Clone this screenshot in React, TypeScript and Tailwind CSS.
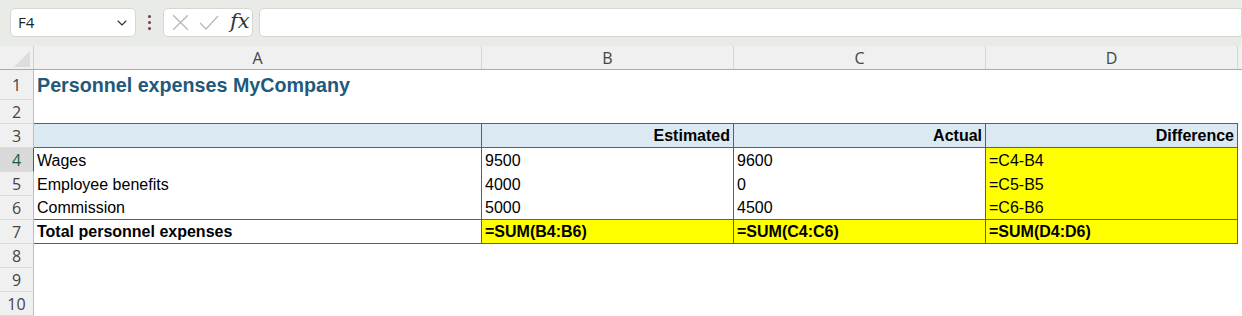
import { ChevronDown } from "lucide-react";

const BLUE = "border-[#2f6d8e]";

type CellProps = {
  text?: string;
  w: string;
  bold?: boolean;
  right?: boolean;
  bg?: string;
  bottom?: boolean;
};

function Cell({ text, w, bold, right, bg, bottom }: CellProps) {
  return (
    <div
      className={`${w} shrink-0 h-full flex items-center px-[3px] border-r ${BLUE} ${bottom ? "border-b" : ""} ${bg ?? ""} ${right ? "justify-end" : ""} ${bold ? "font-bold" : ""}`}
    >
      <span className="leading-none pt-[1px]">{text}</span>
    </div>
  );
}

function RowHead({ n, h = "h-[24px]", active }: { n: number; h?: string; active?: boolean }) {
  return (
    <div
      className={`w-[34px] shrink-0 ${h} flex items-center justify-center border-b border-b-[#dcdcdc] border-r ${
        active ? "bg-[#d9d9d9] border-r-[#217346] text-[#1d5c3a]" : "bg-[#f0f0f0] border-r-[#bdbdbd] text-[#444]"
      } text-[16px]`}
      style={{ fontFamily: '"Open Sans", "Noto Sans", sans-serif' }}
    >
      {n}
    </div>
  );
}

const widths = ["w-[448px]", "w-[252px]", "w-[252px]", "w-[252px]"];

const body = [
  { n: 4, cells: ["Wages", "9500", "9600", "=C4-B4"], active: true },
  { n: 5, cells: ["Employee benefits", "4000", "0", "=C5-B5"] },
  { n: 6, cells: ["Commission", "5000", "4500", "=C6-B6"], bottom: true },
];

export default function App() {
  return (
    <div
      className="w-[1242px] h-[316px] overflow-hidden bg-white text-black"
      style={{ fontFamily: '"Liberation Sans", Arial, sans-serif' }}
    >
      {/* formula bar */}
      <div className="h-[46px] bg-[#e8ebe6] flex items-start pt-[8px] pl-[10px] gap-0">
        <div className="w-[126px] h-[29px] bg-white border border-[#d6d6d6] rounded-[5px] flex items-center justify-between pl-[7px] pr-[5px]">
          <span className="text-[15px] text-[#222]" style={{ fontFamily: '"Open Sans", sans-serif' }}>F4</span>
          <ChevronDown size={16} strokeWidth={1.6} className="text-[#333]" />
        </div>
        <div className="w-[27px] h-[29px] flex flex-col items-center justify-center gap-[3px]">
          <span className="w-[3px] h-[3px] bg-[#6b3c48] rounded-full" />
          <span className="w-[3px] h-[3px] bg-[#6b3c48] rounded-full" />
          <span className="w-[3px] h-[3px] bg-[#6b3c48] rounded-full" />
        </div>
        <div className="w-[90px] h-[29px] bg-white border border-[#d6d6d6] rounded-[5px] flex items-center pl-[6px] gap-[7px]">
          <svg width="21" height="21" viewBox="0 0 20 20" className="shrink-0">
            <path d="M3 3 L17 17 M17 3 L3 17" stroke="#b8b8b8" strokeWidth="1.3" fill="none" />
          </svg>
          <svg width="22" height="20" viewBox="0 0 22 20" className="shrink-0">
            <path d="M2 10 L8 16 L20 3" stroke="#b8b8b8" strokeWidth="1.3" fill="none" />
          </svg>
          <span
            className="italic text-[21px] text-[#333] leading-none ml-[3px] -mt-[2px]"
            style={{ fontFamily: '"DejaVu Serif", "Liberation Serif", serif' }}
          >
            fx
          </span>
        </div>
        <div className="ml-[6px] flex-1 h-[29px] bg-white border border-[#d6d6d6] rounded-l-[5px]" />
      </div>

      {/* column headers */}
      <div
        className="flex h-[24px] bg-[#f0f0f0] border-b border-[#ababab] text-[16px] text-[#444]"
        style={{ fontFamily: '"Open Sans", "Noto Sans", sans-serif' }}
      >
        <div className="w-[34px] shrink-0 border-r border-[#d0d0d0] flex items-end justify-end pr-[3px] pb-[2px]">
          <svg width="16" height="16" viewBox="0 0 16 16">
            <path d="M16 0 L16 16 L0 16 Z" fill="#dcdcdc" />
          </svg>
        </div>
        {["A", "B", "C", "D"].map((l, i) => (
          <div key={l} className={`${widths[i]} shrink-0 border-r border-[#d6d6d6] flex items-center justify-center`}>
            {l}
          </div>
        ))}
        <div className="flex-1" />
      </div>

      {/* row 1 */}
      <div className="flex h-[30px]">
        <RowHead n={1} h="h-[30px]" />
        <div className="flex-1 flex items-center pl-[3px] pt-[2px] text-[19.7px] font-bold text-[#1f5a7c]">
          Personnel expenses MyCompany
        </div>
      </div>

      {/* row 2 */}
      <div className="flex h-[24px] text-[16px]">
        <RowHead n={2} />
        <div className={`w-[1204px] shrink-0 border-b ${BLUE}`} />
      </div>

      {/* row 3 */}
      <div className="flex h-[24px] text-[16px]">
        <RowHead n={3} />
        {["", "Estimated", "Actual", "Difference"].map((t, i) => (
          <Cell key={i} w={widths[i]} text={t} bold right bg="bg-[#dbe9f2]" bottom />
        ))}
      </div>

      {body.map((r) => (
        <div key={r.n} className="flex h-[24px] text-[16px]">
          <RowHead n={r.n} active={r.active} />
          {r.cells.map((t, i) => (
            <Cell key={i} w={widths[i]} text={t} bg={i === 3 ? "bg-[#ffff00]" : "bg-white"} bottom={r.bottom} />
          ))}
        </div>
      ))}

      {/* row 7 */}
      <div className="flex h-[24px] text-[16px]">
        <RowHead n={7} />
        {["Total personnel expenses", "=SUM(B4:B6)", "=SUM(C4:C6)", "=SUM(D4:D6)"].map((t, i) => (
          <Cell key={i} w={widths[i]} text={t} bold bg={i === 0 ? "bg-white" : "bg-[#ffff00]"} bottom />
        ))}
      </div>

      {[8, 9, 10].map((n) => (
        <div key={n} className="flex h-[24px]">
          <RowHead n={n} />
          <div className="flex-1" />
        </div>
      ))}
    </div>
  );
}
